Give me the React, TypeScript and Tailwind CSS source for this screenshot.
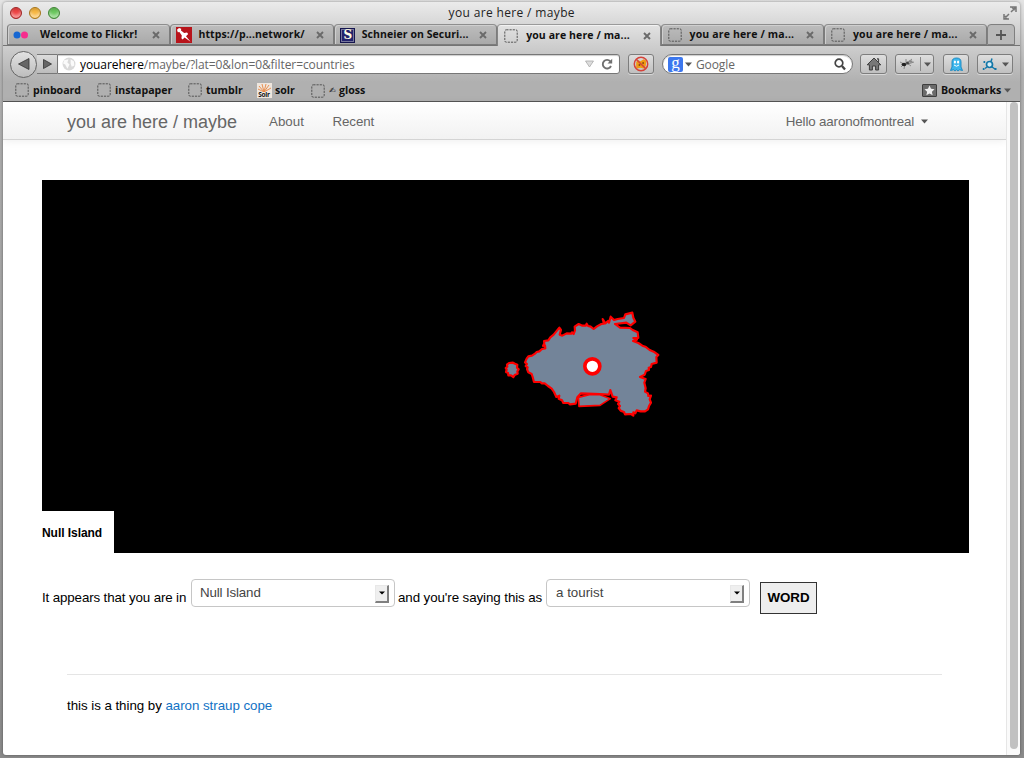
import React from "react";

type TabKind = "flickr" | "pin" | "schneier" | "blank";

const Dashed = () => (
  <svg width="14" height="14" viewBox="0 0 14 14" fill="none" stroke="#555" strokeWidth="1" className="shrink-0">
    <rect x="0.8" y="0.8" width="12.4" height="12.4" rx="1.5" strokeDasharray="2.2 1" />
  </svg>
);

const Favicon = ({ kind }: { kind: TabKind }) => {
  if (kind === "flickr")
    return (
      <svg width="16" height="16" viewBox="0 0 16 16" className="shrink-0">
        <circle cx="4" cy="8" r="3.5" fill="#1767d2" />
        <circle cx="11.5" cy="8" r="3.5" fill="#f62e8d" />
      </svg>
    );
  if (kind === "pin")
    return (
      <svg width="16" height="16" viewBox="0 0 16 16" className="shrink-0">
        <rect width="16" height="16" fill="#b8141b" />
        <path d="M1 2.8 L3 1 L5.2 1.8 L5 3.4 L8.2 6 L11 5.6 L12.2 7 L10 9.2 L14.6 14.8 L8.6 10.5 L6.6 12.6 L5.4 11.3 L5.8 8.4 L3.4 5 L1.8 5.2 Z" fill="#fff" />
      </svg>
    );
  if (kind === "schneier")
    return (
      <span className="flex h-[15px] w-[15px] shrink-0 items-center justify-center border border-[#15154f] bg-[#24246c] font-['DejaVu_Serif'] text-[12px] leading-none font-bold text-[#fffde6] shadow-[inset_0_0_0_1px_#77779c]">
        S
      </span>
    );
  return <Dashed />;
};

const Close = () => (
  <svg width="8" height="8" viewBox="0 0 8 8" className="shrink-0" stroke="#6a6a6a" strokeWidth="1.9">
    <path d="M1 1 L7 7 M7 1 L1 7" />
  </svg>
);

const Tab = ({ kind, label, labelClass, active = false }: { kind: TabKind; label: string; labelClass: string; active?: boolean }) => (
  <div
    className={
      active
        ? "flex h-[22px] w-[163.4px] items-center rounded-t-[4px] border-x border-t border-[#858585] border-t-[#9a9a9a] bg-linear-to-b from-[#e2e2e2] to-[#cecece] pr-[9px] pl-[5px] shadow-[inset_0_1px_0_#f2f2f2]"
        : "flex h-[21px] w-[163.4px] items-center rounded-t-[4px] border border-[#7c7c7c] border-t-[#8e8e8e] bg-linear-to-b from-[#bdbdbd] to-[#a9a9a9] pt-[1px] pr-[9px] pl-[5px] shadow-[inset_1px_1px_0_#cfcfcf]"
    }
  >
    <span className="flex w-[16px] justify-center">
      <Favicon kind={kind} />
    </span>
    <span className={`flex-1 text-[10.5px] font-bold whitespace-nowrap text-[#111] ${labelClass}`}>{label}</span>
    <Close />
  </div>
);

const ToolButton = ({ className, children }: { className: string; children: React.ReactNode }) => (
  <div className={`flex h-[20px] items-center justify-center rounded-[3px] border border-[#7d7d7d] bg-linear-to-b from-[#dedede] to-[#c0c0c0] shadow-[0_1px_0_#d8d8d8] ${className}`}>
    {children}
  </div>
);

const Down = ({ color = "#555" }: { color?: string }) => (
  <svg width="7" height="5" viewBox="0 0 7 5" className="shrink-0">
    <path d="M0 0.5 H7 L3.5 4.5 Z" fill={color} />
  </svg>
);

const Select = ({ value, textClass }: { value: string; textClass: string }) => (
  <div className="flex h-[28px] w-[204px] shrink-0 items-center justify-between rounded-[4px] border border-[#c6c6c6] bg-white pr-[5px] pl-[8px] text-[#444]">
    <span className={textClass}>{value}</span>
    <span className="mt-[1px] flex h-[18px] w-[14px] items-center justify-center border-t border-r-2 border-b-2 border-l border-[#e8e8e8] border-r-[#808080] border-b-[#808080] bg-[#efefef]">
      <svg width="6" height="4" viewBox="0 0 6 4">
        <path d="M0 0.5 H6 L3 3.5 Z" fill="#000" />
      </svg>
    </span>
  </div>
);

const Light = ({ className }: { className: string }) => (
  <span className={`h-[12px] w-[12px] rounded-full border shadow-[inset_0_-3px_3px_rgba(255,255,255,0.45),inset_0_2px_2px_rgba(0,0,0,0.12)] ${className}`} />
);

const Bookmark = ({ className, label, children }: { className: string; label: string; children: React.ReactNode }) => (
  <div className={`flex items-center ${className}`}>
    <span className="flex w-[16px] justify-center">{children}</span>
    <span className="ml-[3px] whitespace-nowrap">{label}</span>
  </div>
);

export default function App() {
  return (
    <div className="h-[758px] w-[1024px] overflow-hidden bg-linear-to-b from-[#e4e4e4] via-[#b0b0b0] via-10% to-[#8a8a8a] pt-[2px] pl-[3px]">
      <div className="flex h-[753px] w-[1017px] flex-col overflow-hidden rounded-t-[4px] rounded-b-[3px] bg-white font-['Open_Sans',sans-serif] shadow-[0_0_3px_rgba(0,0,0,0.4)]">
        <header className="flex h-[100px] shrink-0 flex-col border-b border-[#555] bg-[#b0b0b0]">
          <div className="flex h-[44px] shrink-0 flex-col justify-between border-b border-[#747474] bg-linear-to-b from-[#ebebeb] to-[#c4c4c4]">
            <div className="flex h-[21px] items-center pr-[3px] pl-[6.5px]">
              <div className="flex w-[61px] gap-[7px]">
                <Light className="border-[#9c2a2a] bg-[#ee4444]" />
                <Light className="border-[#a5761f] bg-[#f7b640]" />
                <Light className="border-[#448439] bg-[#69c75c]" />
              </div>
              <div className="flex-1 pr-[50px] text-center text-[12px] tracking-[0.35px] text-[#222]">you are here / maybe</div>
              <svg width="14" height="14" viewBox="0 0 14 14" stroke="#777" strokeWidth="1.5" fill="none">
                <path d="M7 1 H13 V6 M13 1 L8 6 M9 1.5 L12 4 M1 8 V13 H6 M1 13 L6 8 M2 10 L4 12.5" />
              </svg>
            </div>
            <div className="-mb-[1px] flex h-[22px] shrink-0 items-start pl-[4px]">
              <Tab kind="flickr" label="Welcome to Flickr!" labelClass="ml-[11px] tracking-[0.05px]" />
              <Tab kind="pin" label="https://p...network/" labelClass="ml-[6px] tracking-[0.12px]" />
              <Tab kind="schneier" label="Schneier on Securi..." labelClass="ml-[6px] tracking-[0.06px]" />
              <Tab kind="blank" label="you are here / ma..." labelClass="ml-[7px] tracking-[0.1px]" active />
              <Tab kind="blank" label="you are here / ma..." labelClass="ml-[7px] tracking-[0.15px]" />
              <Tab kind="blank" label="you are here / ma..." labelClass="ml-[7px] tracking-[0.15px]" />
              <div className="flex h-[21px] w-[28px] items-center justify-center rounded-t-[4px] border border-[#7f7f7f] bg-[#b9b9b9]">
                <svg width="10" height="10" viewBox="0 0 10 10" stroke="#555" strokeWidth="1.8">
                  <path d="M5 0 V10 M0 5 H10" />
                </svg>
              </div>
            </div>
          </div>
          <div className="flex h-[36px] shrink-0 items-center bg-linear-to-b from-[#cecece] to-[#b0b0b0] pl-[7px]">
            <div className="z-10 flex h-[27px] w-[27px] shrink-0 items-center justify-center rounded-full border border-[#666] bg-linear-to-b from-[#e2e2e2] to-[#bdbdbd]">
              <svg width="12" height="12" viewBox="0 0 12 12">
                <path d="M0.5 6 L11 0.5 V11.5 Z" fill="#666" stroke="#333" strokeWidth="0.8" />
              </svg>
            </div>
            <div className="flex h-[20px] w-[20px] shrink-0 items-center justify-center border-y border-[#777] bg-linear-to-b from-[#dcdcdc] to-[#bcbcbc]">
              <svg width="9" height="10" viewBox="0 0 9 10">
                <path d="M0.5 0.5 L8.5 5 L0.5 9.5 Z" fill="#666" stroke="#333" strokeWidth="0.8" />
              </svg>
            </div>
            <div className="flex h-[20px] w-[563px] shrink-0 items-center rounded-r-[3px] border border-[#777] bg-white pr-[6px] pl-[4px] shadow-[inset_0_1px_1px_#ccc]">
              <svg width="14" height="14" viewBox="0 0 13 13">
                <circle cx="6.5" cy="6.5" r="6" fill="#d9d9d9" />
                <path d="M2 3 L6 2 L5 5 L7 7 L5 11 L3 7 L1 6 Z M8 2 L11 4 L11.5 8 L9 9 L8 6 Z" fill="#fafafa" />
              </svg>
              <span className="ml-[4px] flex-1 pt-[1px] text-[12px] tracking-[-0.08px] text-[#666]">
                <span className="text-black">youarehere</span>/maybe/?lat=0&amp;lon=0&amp;filter=countries
              </span>
              <svg width="9" height="8" viewBox="0 0 9 8">
                <path d="M0.5 1 H8.5 L4.5 7 Z" fill="#ddd" stroke="#aaa" strokeWidth="0.8" />
              </svg>
              <svg width="12" height="12" viewBox="0 0 12 12" className="ml-[7px]">
                <path d="M9.3 3.3 A4.3 4.3 0 1 0 10 8" fill="none" stroke="#707070" strokeWidth="1.9" />
                <path d="M11.2 0.8 V5.5 H6.5 Z" fill="#707070" />
              </svg>
            </div>
            <ToolButton className="ml-[8px] w-[26px] shrink-0">
              <svg width="16" height="16" viewBox="0 0 15 15">
                <path d="M3 6 L4 3.5 L7 5 L10 3 L12.5 4.5 L12 9 L11 12 L7 11 L3 12 Z" fill="#ef9a14" />
                <circle cx="7.5" cy="7.5" r="6.3" fill="none" stroke="#d6423a" strokeWidth="1.4" />
                <path d="M3 3 L12 12" stroke="#d6423a" strokeWidth="1.4" />
                <circle cx="6" cy="8.5" r="0.9" fill="#8b4a10" />
                <circle cx="9.5" cy="6.5" r="0.9" fill="#8b4a10" />
              </svg>
            </ToolButton>
            <div className="ml-[8px] flex h-[20px] w-[191px] shrink-0 items-center rounded-full border border-[#777] bg-white pr-[6px] pl-[5px] shadow-[inset_0_1px_1px_#ccc]">
              <span className="flex h-[15px] w-[15px] items-center justify-center rounded-[2px] bg-[#3c77ee] pb-[4px] font-['Liberation_Serif'] text-[17px] leading-none text-white">g</span>
              <span className="ml-[2px] flex"><Down /></span>
              <span className="ml-[4px] flex-1 pt-[1px] text-[12px] tracking-[-0.1px] text-[#666]">Google</span>
              <svg width="12" height="13" viewBox="0 0 12 13" fill="none" stroke="#444">
                <circle cx="5" cy="5" r="3.8" strokeWidth="1.7" />
                <path d="M8 8 L11 11.5" strokeWidth="2.3" />
              </svg>
            </div>
            <ToolButton className="ml-[7px] w-[27px] shrink-0">
              <svg width="16" height="14" viewBox="0 0 16 14" fill="#777" stroke="#3d3d3d" strokeWidth="1">
                <path d="M8 1 L14.8 7.8 H12.6 V13 H9.6 V9 H6.4 V13 H3.4 V7.8 H1.2 Z M11 1.8 H12.6 V5" />
              </svg>
            </ToolButton>
            <ToolButton className="ml-[8px] w-[39px] shrink-0">
              <svg width="16" height="14" viewBox="0 0 16 14">
                <g stroke="#777" strokeWidth="0.8" fill="none">
                  <path d="M1 5 L5 7 L2 10 M7 2 L7 6 M13 2 L8 6 L12 9 M9 7 L15 5 M6 7 L5 12" />
                </g>
                <ellipse cx="5" cy="7.5" rx="2.4" ry="1.7" fill="#222" />
                <circle cx="8.5" cy="6" r="1.5" fill="#444" />
                <ellipse cx="11.5" cy="4.5" rx="2" ry="1.3" fill="#888" />
              </svg>
              <span className="ml-[5px] flex h-[14px] items-center border-l border-[#888] pl-[3px]"><Down /></span>
            </ToolButton>
            <ToolButton className="ml-[9px] w-[26px] shrink-0">
              <svg width="13" height="15" viewBox="0 0 13 15">
                <path d="M2 10 V5 Q2 1 6.5 1 Q11 1 11 5 V10 L12.5 13.5 L9.5 12.8 L8 14 L6.5 12.8 L5 14 L3.5 12.8 L0.5 13.5 Z" fill="#3db6ec" stroke="#1687c0" strokeWidth="0.9" />
                <ellipse cx="4.9" cy="5" rx="1.1" ry="1.5" fill="#fff" />
                <ellipse cx="8.1" cy="5" rx="1.1" ry="1.5" fill="#fff" />
                <path d="M4 8 Q6.5 10.5 9 8" stroke="#fff" fill="none" />
              </svg>
            </ToolButton>
            <ToolButton className="ml-[8px] w-[36px] shrink-0">
              <svg width="15" height="14" viewBox="0 0 15 14" fill="none" stroke="#1277a8">
                <circle cx="7.5" cy="7.5" r="3" strokeWidth="1.7" fill="#d5edf7" />
                <path d="M9 4.5 L10 1.5 M10 10 L13 12 M5 10 L3 11.5" strokeWidth="1.5" />
                <path d="M1.5 5 H3.2 M0.8 12 H2.5 M12.5 12 H14.5" strokeWidth="1.8" />
              </svg>
              <span className="ml-[5px] flex"><Down /></span>
            </ToolButton>
          </div>
          <div className="flex h-[17px] shrink-0 items-center pr-[9px] pl-[11px] text-[10.6px] font-bold text-[#111]">
            <Bookmark className="w-[82px]" label="pinboard"><Dashed /></Bookmark>
            <Bookmark className="w-[91px]" label="instapaper"><Dashed /></Bookmark>
            <Bookmark className="w-[69px]" label="tumblr"><Dashed /></Bookmark>
            <Bookmark className="w-[54px]" label="solr">
              <span className="flex h-[15px] w-[15px] flex-col items-center overflow-hidden bg-[#eee6de]">
                <svg width="15" height="9" viewBox="0 0 15 9" stroke="#e98440" strokeWidth="0.9">
                  <path d="M7 9 L1 6 M7 9 L2 3 M7 9 L5 1 M7 9 L9 1 M7 9 L12 2 M7 9 L14 5" />
                </svg>
                <span className="text-[6.5px] leading-[6px] tracking-[-0.2px]">Solr</span>
              </span>
            </Bookmark>
            <span className="flex w-[16px] justify-center"><Dashed /></span>
            <span className="ml-[3px] w-[10px] font-['DejaVu_Sans'] text-[8px] leading-none">✍</span>
            <span className="flex-1">gloss</span>
            <span className="flex h-[13px] w-[15px] items-center justify-center rounded-[1px] border border-[#3e3e3e] bg-[#6b6b6b]">
              <svg width="11" height="11" viewBox="0 0 24 24" fill="#eee">
                <path d="M12 1 L15.3 8.4 L23 9.2 L17.2 14.5 L18.9 22.4 L12 18.3 L5.1 22.4 L6.8 14.5 L1 9.2 L8.7 8.4 Z" />
              </svg>
            </span>
            <span className="ml-[4px] w-[63px]">Bookmarks</span>
            <Down />
          </div>
        </header>
        <div className="flex min-h-0 flex-1 font-['Liberation_Sans',Arial,sans-serif] text-[13.35px] leading-[18px] text-black">
          <main className="w-[1003px]">
            <nav className="flex h-[38px] items-center border-b border-[#d4d4d4] bg-linear-to-b from-white to-[#f2f2f2] pt-[3px] pr-[78px] pl-[64px] text-[#666] shadow-[0_1px_8px_rgba(0,0,0,0.07)]">
              <span className="w-[202px] text-[18px]">you are here / maybe</span>
              <span className="w-[63.5px]">About</span>
              <span className="flex-1 tracking-[-0.1px]">Recent</span>
              <span className="tracking-[-0.15px]">Hello aaronofmontreal</span>
              <span className="mb-[2px] ml-[7px]"><Down /></span>
            </nav>
            <section className="relative mt-[40px] ml-[39px] flex h-[373px] w-[927px] items-end bg-black">
              <svg className="absolute top-[120px] left-[453px]" width="175" height="125" viewBox="0 0 525 375" strokeLinejoin="round">
                <g fill="#738499" stroke="#f00" strokeWidth="6.5">
                  <path d="M36 194 L42 189 L54 188 L60 191 L67 194 L66 203 L71 208 L67 214 L68 221 L60 224 L55 231 L48 226 L40 226 L39 219 L33 216 L35 209 L32 204 L37 200 Z" />
                  <path d="M90 187 L95 176 L100 169 L111 167 L120 161 L125 156 L133 154 L141 147 L151 145 L150 136 L144 138 L148 130 L147 123 L160 121 L166 112 L176 104 L193 83 L198 90 L194 104 L202 107 L215 100 L229 101 L231 97 L236 102 L240 91 L239 80 L251 72 L262 77 L272 77 L275 71 L279 78 L287 80 L296 87 L306 79 L319 72 L327 71 L323 57 L331 70 L339 63 L342 68 L347 50 L357 60 L368 57 L387 54 L391 43 L412 38 L415 53 L421 65 L407 76 L394 68 L360 72 L375 83 L405 84 L413 90 L428 97 L430 114 L415 114 L426 119 L414 123 L430 129 L442 137 L451 140 L464 150 L476 155 L490 165 L484 171 L485 188 L470 192 L468 201 L461 203 L462 210 L453 213 L449 224 L435 231 L452 237 L448 248 L452 265 L450 275 L459 280 L460 288 L468 287 L464 298 L468 308 L462 318 L459 328 L450 334 L437 334 L425 331 L421 340 L415 337 L415 347 L408 342 L390 343 L387 336 L377 332 L371 324 L375 318 L369 312 L373 305 L361 301 L365 292 L353 290 L346 270 L342 284 L315 282 L258 280 L247 292 L242 311 L225 313 L220 309 L205 309 L201 301 L191 296 L193 287 L184 291 L177 276 L170 266 L159 258 L149 250 L140 250 L136 246 L117 246 L113 231 L110 222 L100 217 L96 207 L98 202 L92 198 L96 192 Z" />
                  <path d="M250 292 L286 283 L315 284 L346 296 L315 316 L252 319 Z" strokeWidth="5" />
                </g>
                <circle cx="292" cy="199" r="22.5" fill="#fff" stroke="#f00" strokeWidth="11" />
              </svg>
              <div className="flex h-[42px] w-[72.4px] items-center bg-white pt-[2px] text-[12px] font-bold tracking-[-0.05px]">Null Island</div>
            </section>
            <form className="mt-[26px] ml-[39px] flex items-start">
              <span className="mt-[9.5px] w-[149px] shrink-0 tracking-[-0.13px] whitespace-nowrap">It appears that you are in</span>
              <Select value="Null Island" textClass="tracking-[-0.15px]" />
              <span className="mt-[9.5px] w-[151px] shrink-0 pl-[3px] tracking-[-0.09px] whitespace-nowrap">and you're saying this as</span>
              <Select value="a tourist" textClass="pl-[1px]" />
              <button type="button" className="mt-[3px] ml-[10px] h-[32px] w-[57px] shrink-0 border border-[#333] bg-[#eee] font-bold">WORD</button>
            </form>
            <footer className="mt-[60px] ml-[64px] w-[875px] border-t border-[#e5e5e5] pt-[22px] tracking-[-0.05px]">
              this is a thing by <a className="text-[#1272c4]">aaron straup cope</a>
            </footer>
          </main>
          <aside className="flex w-[14px] justify-center border-l border-[#e6e6e6] bg-[#fafafa]">
            <div className="h-[647px] w-[8px] rounded-full bg-[#c1c1c1]" />
          </aside>
        </div>
      </div>
    </div>
  );
}
